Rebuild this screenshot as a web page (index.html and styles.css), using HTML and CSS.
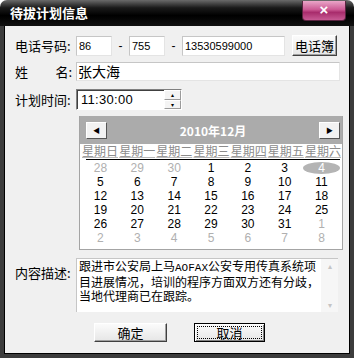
FILE: index.html
```html
<!DOCTYPE html>
<html lang="zh-CN">

<head>
    <meta charset="UTF-8">
    <title>待拔计划信息</title>
    <link rel="stylesheet" href="styles.css">
</head>

<body>
    <div class="window">
        <div class="titlebar">
            <span class="title">待拔计划信息</span>
            <span class="close">×</span>
        </div>
        <div class="frame">
            <div class="row row-phone">
                <label class="label">电话号码:</label>
                <div class="input w-area">86</div>
                <span class="dash">-</span>
                <div class="input w-city">755</div>
                <span class="dash">-</span>
                <div class="input w-num">13530599000</div>
                <button class="btn btn-book">电话簿</button>
            </div>
            <div class="row row-name">
                <label class="label label-spread"><span>姓</span><span>名:</span></label>
                <div class="input w-name">张大海</div>
            </div>
            <div class="row row-time">
                <label class="label">计划时间:</label>
                <div class="timebox">
                    <span class="time-text">11:30:00</span>
                    <div class="spin">
                        <span class="spin-btn">&#9652;</span>
                        <span class="spin-btn">&#9662;</span>
                    </div>
                </div>
            </div>

            <!-- calendar -->
            <div class="calendar">
                <div class="cal-head">
                    <span class="cal-nav">&#9664;</span>
                    <span class="cal-title">2010年12月</span>
                    <span class="cal-nav">&#9654;</span>
                </div>
                <div class="cal-week">
                    <span>星期日</span><span>星期一</span><span>星期二</span><span>星期三</span><span>星期四</span><span>星期五</span><span>星期六</span>
                </div>
                <div class="cal-rule"></div>
                <div class="cal-days" id="days"></div>
            </div>

            <div class="row row-desc">
                <label class="label">内容描述:</label>
                <div class="textarea">
                    <div class="text">跟进市公安局上马<span class="mono">AOFAX</span>公安专用传真系统项<br>目进展情况，培训的程序方面双方还有分歧，<br>当地代理商已在跟踪。</div>
                    <div class="scroll">
                        <span>&#9652;</span>
                        <span>&#9662;</span>
                    </div>
                </div>
            </div>

            <div class="actions">
                <button class="btn btn-ok">确定</button>
                <button class="btn btn-cancel"><span class="focus">取消</span></button>
            </div>
        </div>
    </div>
    <script>
        const days = [28, 29, 30, 1, 2, 3, 4, 5, 6, 7, 8, 9, 10, 11, 12, 13, 14, 15, 16, 17, 18,
            19, 20, 21, 22, 23, 24, 25, 26, 27, 28, 29, 30, 31, 1, 2, 3, 4, 5, 6, 7, 8];
        const box = document.getElementById('days');
        days.forEach((d, i) => {
            const cell = document.createElement('span');
            cell.className = 'day';
            if (i < 3 || i > 33) cell.classList.add('other');
            if (i === 6) cell.classList.add('today');
            cell.textContent = d;
            box.appendChild(cell);
        });
    </script>
</body>

</html>
```

FILE: styles.css
```css
body {
    margin: 0;
    padding: 0;
    background: #fff;
    font-family: "Noto Sans CJK SC", "Liberation Sans", sans-serif;
    font-size: 13px;
}

.window {
    width: 354px;
    height: 358px;
    display: flex;
    flex-direction: column;
}

.titlebar {
    height: 26px;
    flex: none;
    display: flex;
    align-items: flex-start;
    justify-content: space-between;
    background: linear-gradient(#6a6a6a, #1a1a1a 30%, #000 60%, #111);
    border-radius: 7px 7px 0 0;
    padding: 0 8px 0 10px;
}

.title {
    color: #fff;
    font-weight: bold;
    font-size: 13px;
    line-height: 26px;
}

.close {
    width: 42px;
    height: 19px;
    margin-top: 1px;
    border: 1px solid #5a2440;
    border-top: none;
    border-radius: 0 0 4px 4px;
    background: linear-gradient(#eaa6c8, #cc5a94 45%, #a82c6c 60%, #c85a94);
    color: #fff;
    font: bold 15px/17px "Liberation Sans", sans-serif;
    text-align: center;
}

.frame {
    flex: 1;
    background: #f0f0f0;
    border: 4px solid #3c3c3c;
    border-top: none;
    box-shadow: inset 1px 0 #000, inset -1px 0 #000, inset 0 -1px #000;
    padding: 9px 0 0 11px;
}

.row {
    display: flex;
    align-items: center;
}

.label {
    width: 61px;
    flex: none;
    color: #000;
    font-size: 13px;
}

.label-spread {
    display: flex;
    justify-content: space-between;
    padding-right: 4px;
    box-sizing: border-box;
}

.input {
    height: 20px;
    box-sizing: border-box;
    background: #fff;
    border: 1px solid #c6c6c6;
    border-right-color: #e4e4e4;
    border-bottom-color: #e4e4e4;
    font: 11px/18px "Liberation Sans", sans-serif;
    padding-left: 2px;
}

.w-area { width: 36px; }
.w-city { width: 36px; }
.w-num { width: 103px; }

.dash {
    width: 17px;
    text-align: center;
    font: 12px "Liberation Sans", sans-serif;
}

.btn {
    font-family: "Noto Sans CJK SC", sans-serif;
    font-size: 13px;
    background: linear-gradient(#fbfbfb, #e6e6e6);
    border: 1px solid #fff;
    border-right-color: #404040;
    border-bottom-color: #404040;
    box-shadow: inset -1px -1px #a0a0a0;
    padding: 0;
    color: #000;
}

.btn-book {
    width: 45px;
    height: 21px;
    margin-left: 7px;
    line-height: 17px;
}

.row-name {
    margin-top: 6px;
}

.w-name {
    width: 264px;
    height: 19px;
    font: 14px/17px "Noto Sans CJK SC", sans-serif;
    padding-left: 1px;
}

.row-time {
    margin-top: 8px;
}

.timebox {
    width: 106px;
    height: 21px;
    box-sizing: border-box;
    background: #fff;
    border: 1px solid #fff;
    border-top-color: #808080;
    border-left-color: #808080;
    box-shadow: inset 1px 1px #404040;
    display: flex;
    justify-content: space-between;
}

.time-text {
    font: 13px/19px "Liberation Sans", sans-serif;
    padding-left: 4px;
    letter-spacing: 0.3px;
}

.spin {
    width: 17px;
    display: flex;
    flex-direction: column;
}

.spin-btn {
    flex: 1;
    background: #f4f4f4;
    border: 1px solid #fff;
    border-right-color: #9a9a9a;
    border-bottom-color: #9a9a9a;
    font-size: 6px;
    line-height: 7px;
    text-align: center;
    color: #000;
}

.calendar {
    width: 264px;
    height: 134px;
    margin: 6px 0 0 64px;
    background: #fff;
    border: 1px solid #a4a4a4;
    border-top: none;
    box-sizing: border-box;
}

.cal-head {
    height: 28px;
    background: #ababab;
    display: flex;
    align-items: center;
    justify-content: space-between;
    padding: 0 2px 0 6px;
}

.cal-nav {
    width: 21px;
    height: 17px;
    box-sizing: border-box;
    background: #f2f2f2;
    border: 1px solid #fff;
    border-right-color: #555;
    border-bottom-color: #555;
    font-size: 7px;
    line-height: 15px;
    text-align: center;
    color: #000;
}

.cal-title {
    color: #fff;
    font-weight: bold;
    font-size: 12px;
}

.cal-week {
    display: flex;
    justify-content: space-between;
    height: 15px;
    padding: 0 1px 0 2px;
    font-size: 12px;
    line-height: 14px;
    color: #8c8c8c;
}

.cal-week span {
    text-decoration: underline;
    text-decoration-color: #b8b8b8;
    white-space: nowrap;
}

.cal-rule {
    height: 1px;
    margin: 0 2px 0 6px;
    background: #000;
}

.cal-days {
    display: grid;
    grid-template-columns: repeat(7, 1fr);
    grid-auto-rows: 14px;
    padding: 1px 2px 0 2px;
}

.day {
    text-align: center;
    font: 12px/14px "Liberation Sans", sans-serif;
    color: #000;
}

.day.other {
    color: #b0b0b0;
}

.day.today {
    color: #fff;
    background: #b4b4b4;
    border-radius: 50%;
    margin: 1px 0;
    line-height: 12px;
}

.row-desc {
    margin-top: 8px;
    align-items: flex-start;
}

.row-desc .label {
    padding-top: 5px;
}

.textarea {
    width: 262px;
    height: 54px;
    box-sizing: border-box;
    background: #fff;
    border: 1px solid #c6c6c6;
    border-right: none;
    border-bottom: none;
    display: flex;
    justify-content: space-between;
}

.text {
    padding: 0 0 0 2px;
    font-size: 12px;
    line-height: 14px;
    white-space: nowrap;
}

.mono {
    font-family: "Liberation Mono", monospace;
    font-size: 11px;
}

.scroll {
    width: 17px;
    background: #f6f6f6;
    display: flex;
    flex-direction: column;
    justify-content: space-between;
    color: #c4c4c4;
    font-size: 8px;
    text-align: center;
    line-height: 14px;
}

.actions {
    display: flex;
    gap: 27px;
    margin: 11px 0 0 79px;
}

.btn-ok,
.btn-cancel {
    width: 73px;
    height: 19px;
    line-height: 15px;
}

.btn-cancel {
    width: 71px;
    border: 1px solid #000;
    box-shadow: inset 1px 1px #fff, inset -1px -1px #808080;
    padding: 2px;
}

.focus {
    display: block;
    height: 100%;
    box-sizing: border-box;
    border: 1px dotted #000;
    line-height: 12px;
}
```
